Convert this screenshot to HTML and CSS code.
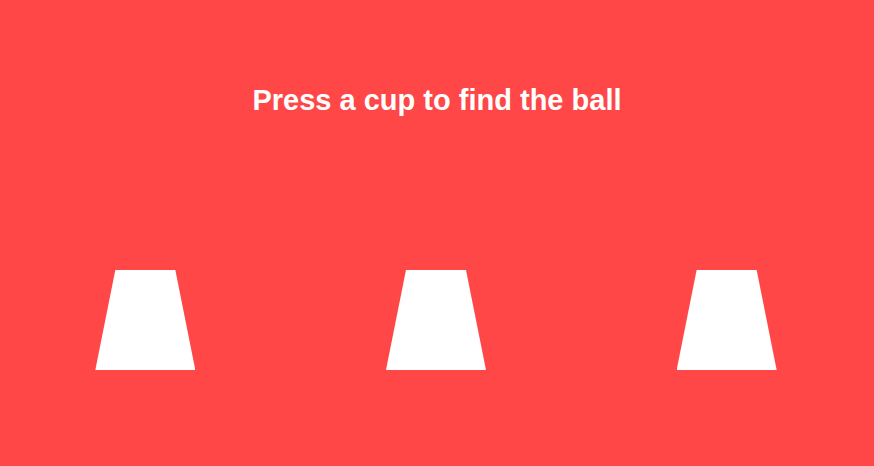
FILE: index.html
```html
<!DOCTYPE html>
<html lang="en">
<head>
<meta charset="utf-8">
<title>Find the ball</title>
<link rel="stylesheet" href="styles.css">
</head>
<body>
<main class="game">
  <h1 class="title">Press a cup to find the ball</h1>
  <div class="cups">
    <div class="cup"></div>
    <div class="cup"></div>
    <div class="cup"></div>
  </div>
</main>
</body>
</html>
```

FILE: styles.css
```css
html, body {
  margin: 0;
  padding: 0;
  height: 100%;
  background: #ff4747;
}
.game {
  display: flex;
  flex-direction: column;
  font-family: "Liberation Sans", Arial, sans-serif;
  color: #ffffff;
}
.title {
  margin: 84px 0 0 0;
  font-size: 29px;
  line-height: 33px;
  font-weight: bold;
  text-align: center;
}
.cups {
  margin-top: 153px;
  width: 872px;
  display: flex;
  justify-content: space-around;
}
.cup {
  width: 100px;
  height: 100px;
  background: #ffffff;
  clip-path: polygon(20% 0, 80% 0, 100% 100%, 0 100%);
  cursor: pointer;
}
```
